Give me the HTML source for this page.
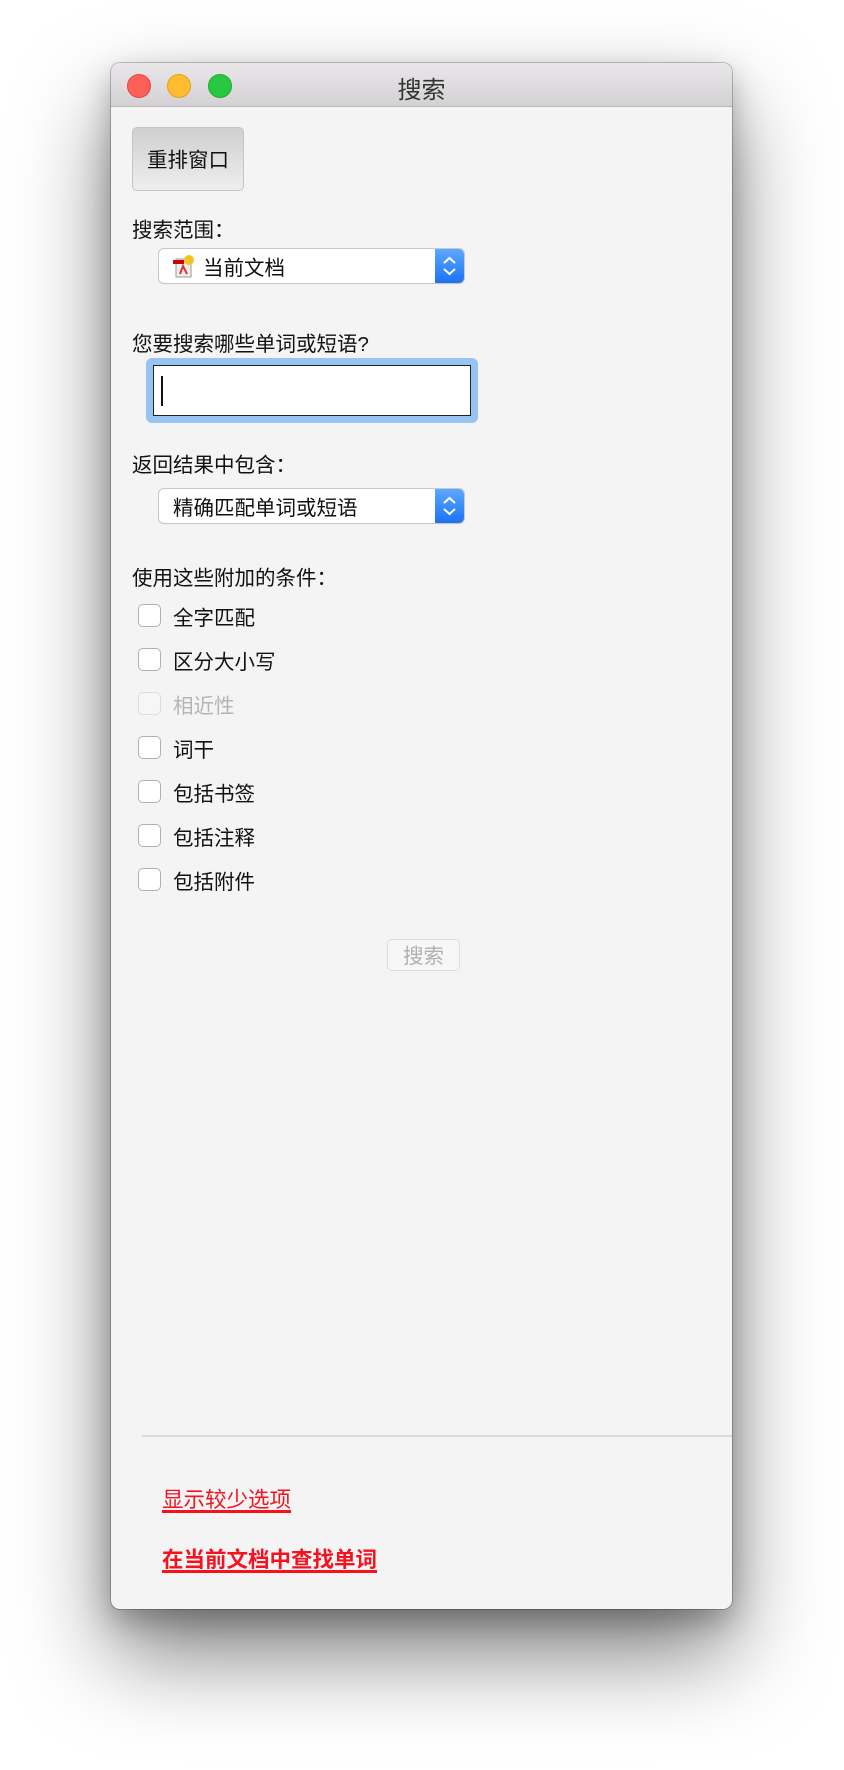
<!DOCTYPE html>
<html><head><meta charset="utf-8"><style>
*{margin:0;padding:0;box-sizing:border-box}
body{width:844px;height:1770px;background:#fff;position:relative;overflow:hidden;font-family:"Liberation Sans","Noto Sans CJK SC",sans-serif;color:#111}
.win{position:absolute;left:111px;top:63px;width:621px;height:1546px;background:#f4f4f4;border-radius:9px;box-shadow:0 0 0 1px rgba(0,0,0,.22),0 45px 90px rgba(0,0,0,.5),0 12px 30px rgba(0,0,0,.25);overflow:hidden}
.tb{position:absolute;left:0;top:0;right:0;height:44px;background:linear-gradient(#e9e7e9,#d3d1d3);border-bottom:1px solid #b8b6b8}
.dot{position:absolute;top:11px;width:24px;height:24px;border-radius:50%}
.title{position:absolute;left:0;right:0;top:7px;text-align:center;font-size:24px;color:#333}
.a{position:absolute;font-size:20.5px;white-space:nowrap;line-height:1}
.btn{position:absolute;left:21px;top:64px;width:112px;height:64px;border:1px solid #c4c4c4;border-radius:5px;background:linear-gradient(#cfcfcf,#eeeeee);font-size:20.5px;text-align:center;line-height:66px}
.pop{position:absolute;left:48px;width:305px;height:34px;background:#fff;border-radius:5px;box-shadow:0 0 0 1px #c8c8c8,0 1px 1px rgba(0,0,0,.15);overflow:hidden}
.pop .ar{position:absolute;right:0;top:0;width:29px;height:34px;background:linear-gradient(#5fa8ff,#1a73f5)}
.cb{position:absolute;left:27px;width:23px;height:23px;border:1px solid #b0b0b0;border-radius:5px;background:#fff}
a{color:#f5121e;text-decoration:underline;text-decoration-thickness:3px;text-underline-offset:3px}
</style></head><body>
<div class="win">
<div class="tb">
<div class="dot" style="left:16px;background:#fe5f57;border:1px solid #e2463f"></div>
<div class="dot" style="left:56px;background:#febc2e;border:1px solid #e1a116"></div>
<div class="dot" style="left:97px;background:#28c840;border:1px solid #1aab29"></div>
<div class="title">搜索</div>
</div>
<div class="btn">重排窗口</div>
<div class="a" style="left:21px;top:158px">搜索范围：</div>
<div class="pop" style="top:186px">
<svg style="position:absolute;left:14px;top:5px" width="24" height="24" viewBox="0 0 24 24"><rect x="3" y="5" width="15" height="18" fill="#eee" stroke="#999"/><rect x="0" y="6" width="11" height="4" fill="#c00"/><path d="M7 20 L10 12 L14 20" stroke="#d33" stroke-width="2" fill="none"/><circle cx="16" cy="6" r="5" fill="#f7c21a"/></svg>
<div class="a" style="left:44px;top:10px">当前文档</div>
<div class="ar"><svg width="29" height="34" viewBox="0 0 29 34"><path d="M9 14 L14.5 9 L20 14 M9 20 L14.5 25 L20 20" stroke="#fff" stroke-width="2" fill="none"/></svg></div>
</div>
<div class="a" style="left:21px;top:272px">您要搜索哪些单词或短语?</div>
<div style="position:absolute;left:35px;top:295px;width:332px;height:65px;border-radius:6px;background:#98c4f4"></div>
<div style="position:absolute;left:42px;top:302px;width:318px;height:51px;background:#fff;border:1.5px solid #222"></div>
<div style="position:absolute;left:50px;top:313px;width:2px;height:30px;background:#111"></div>
<div class="a" style="left:21px;top:393px">返回结果中包含：</div>
<div class="pop" style="top:426px">
<div class="a" style="left:14px;top:10px">精确匹配单词或短语</div>
<div class="ar"><svg width="29" height="34" viewBox="0 0 29 34"><path d="M9 14 L14.5 9 L20 14 M9 20 L14.5 25 L20 20" stroke="#fff" stroke-width="2" fill="none"/></svg></div>
</div>
<div class="a" style="left:21px;top:506px">使用这些附加的条件：</div>
<div class="cb" style="top:541px"></div><div class="a" style="left:62px;top:546px">全字匹配</div>
<div class="cb" style="top:585px"></div><div class="a" style="left:62px;top:590px">区分大小写</div>
<div class="cb" style="top:629px;border-color:#ddd;background:#f6f6f6"></div><div class="a" style="left:62px;top:634px;color:#b5b5b5">相近性</div>
<div class="cb" style="top:673px"></div><div class="a" style="left:62px;top:678px">词干</div>
<div class="cb" style="top:717px"></div><div class="a" style="left:62px;top:722px">包括书签</div>
<div class="cb" style="top:761px"></div><div class="a" style="left:62px;top:766px">包括注释</div>
<div class="cb" style="top:805px"></div><div class="a" style="left:62px;top:810px">包括附件</div>
<div style="position:absolute;left:276px;top:876px;width:73px;height:32px;border:1px solid #ddd;border-radius:5px;background:#f7f7f7;color:#b0b0b0;font-size:20.5px;text-align:center;line-height:33px">搜索</div>
<div style="position:absolute;left:31px;right:0;top:1372px;height:2px;background:#dadada"></div>
<div class="a" style="left:51px;top:1427px;font-size:21.5px"><a>显示较少选项</a></div>
<div class="a" style="left:51px;top:1487px;font-size:21.5px;font-weight:bold"><a>在当前文档中查找单词</a></div>
</div>
</body></html>
